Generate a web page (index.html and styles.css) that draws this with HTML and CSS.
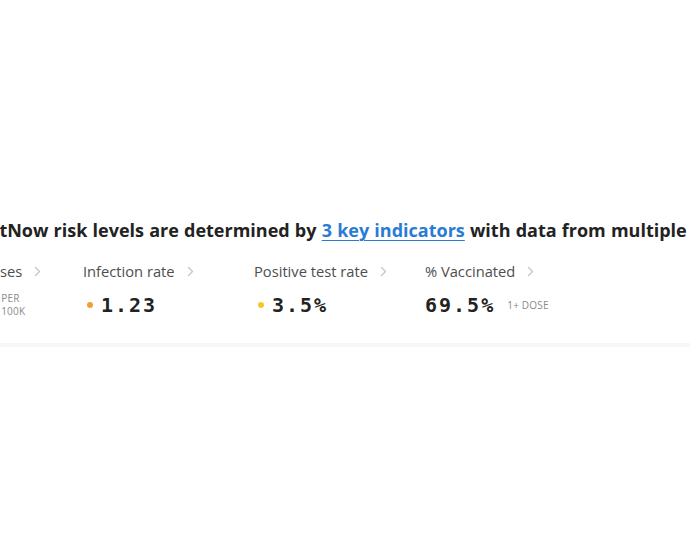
FILE: index.html
```html
<!DOCTYPE html>
<html lang="en">
<head>
  <meta charset="UTF-8" />
  <meta name="viewport" content="width=device-width, initial-scale=1.0" />
  <title>Risk levels</title>
  <link rel="stylesheet" href="styles.css">
</head>
<body>
  <div class="pagina">
    <div class="intro">
      CovidActNow risk levels are determined by <a href="#">3 key indicators</a> with data from multiple sources.
    </div>

    <div class="metricas">
      <div class="metrica primeira">
        <div class="rotulo">Daily new cases
          <svg class="seta" viewBox="0 0 7 11"><polyline points="1.5,1.5 5.5,5.5 1.5,9.5" /></svg>
        </div>
        <div class="valor"><span class="ponto laranja"></span>21.4<span class="unidade">PER<br>100K</span></div>
      </div>
      <div class="metrica">
        <div class="rotulo">Infection rate
          <svg class="seta" viewBox="0 0 7 11"><polyline points="1.5,1.5 5.5,5.5 1.5,9.5" /></svg>
        </div>
        <div class="valor"><span class="ponto laranja"></span>1.23</div>
      </div>
      <div class="metrica">
        <div class="rotulo">Positive test rate
          <svg class="seta" viewBox="0 0 7 11"><polyline points="1.5,1.5 5.5,5.5 1.5,9.5" /></svg>
        </div>
        <div class="valor"><span class="ponto amarelo"></span>3.5%</div>
      </div>
      <div class="metrica">
        <div class="rotulo">% Vaccinated
          <svg class="seta" viewBox="0 0 7 11"><polyline points="1.5,1.5 5.5,5.5 1.5,9.5" /></svg>
        </div>
        <div class="valor">69.5%<span class="dose">1+ DOSE</span></div>
      </div>
    </div>

    <div class="faixa"></div>
  </div>
</body>
</html>
```

FILE: styles.css
```css
* { box-sizing: border-box; }
html, body { margin: 0; background: #fff; overflow: hidden; }
body { font-family: "Open Sans", "Liberation Sans", sans-serif; color: #222; width: 690px; height: 550px; }

.pagina   { padding-top: 217px; }
.intro {
  white-space: nowrap; font-size: 18px; font-weight: 700; color: #222;
  margin-left: -72px; line-height: 26px; word-spacing: 0.5px;
}
.intro a  { color: #2a7bd3; text-decoration: underline; text-decoration-thickness: 1px; text-underline-offset: 3px; }

.metricas { display: flex; margin-left: -85px; margin-top: 19px; white-space: nowrap; }
.metrica  { width: 171px; flex: none; }
.metrica.primeira { width: 168px; }
.rotulo   { display: flex; align-items: center; font-size: 14.7px; color: #4e4e4e; line-height: 18px; }
.seta {
  width: 7px; height: 11px; margin-left: 12px; flex: none;
  fill: none; stroke: #c6c6c6; stroke-width: 1.3; stroke-linecap: round; stroke-linejoin: round;
}

.valor {
  display: flex; align-items: center; margin-top: 12px; height: 26px;
  font-family: "DejaVu Sans Mono", "Liberation Mono", monospace;
  font-weight: 700; font-size: 20px; letter-spacing: 2px; color: #222;
}
.ponto    { width: 6px; height: 6px; border-radius: 50%; margin: 0 8px 0 4px; flex: none; }
.laranja  { background: #f0a030; }
.amarelo  { background: #f6c62a; }
.unidade, .dose {
  font-family: "Open Sans", "Liberation Sans", sans-serif; font-weight: 400;
  font-size: 10px; letter-spacing: 0.2px; color: #8a8a8a; line-height: 13px;
}
.unidade  { margin-left: 12px; }
.dose     { margin-left: 12px; }

.faixa    { height: 4px; background: #f7f7f7; margin-top: 25px; }
```
